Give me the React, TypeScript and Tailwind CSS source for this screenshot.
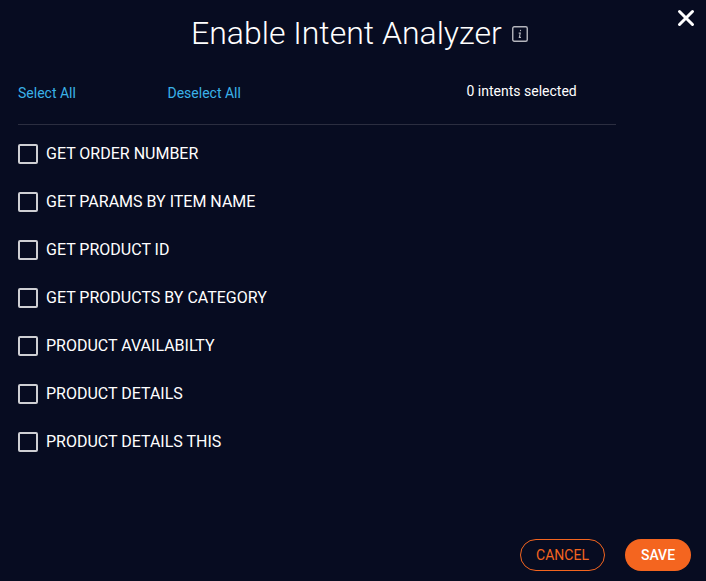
import React from "react";

const intents: string[] = [
  "GET ORDER NUMBER",
  "GET PARAMS BY ITEM NAME",
  "GET PRODUCT ID",
  "GET PRODUCTS BY CATEGORY",
  "PRODUCT AVAILABILTY",
  "PRODUCT DETAILS",
  "PRODUCT DETAILS THIS",
];

export default function App() {
  return (
    <div className="relative flex h-[581px] w-[706px] flex-col overflow-hidden bg-[#070c21] font-['Roboto',sans-serif] text-white">
      <button aria-label="Close" className="absolute left-[677px] top-[9px]">
        <svg width="18" height="18" viewBox="0 0 18 18" fill="none" stroke="white" strokeWidth="3" strokeLinecap="round">
          <path d="M2.5 2.5 15.5 15.5M15.5 2.5 2.5 15.5" />
        </svg>
      </button>
      <header className="flex h-[66px] items-center pl-[191px]">
        <h1 className="whitespace-nowrap text-[32px] font-light leading-[40px]">Enable Intent Analyzer</h1>
        <svg className="ml-[10px] mt-[2px]" width="16" height="16" viewBox="0 0 16 16" fill="none" stroke="#b5b6bd">
          <rect x="0.75" y="0.75" width="14.5" height="14.5" rx="1.5" strokeWidth="1.4" />
          <path d="M8.6 3.9 8.4 5.2M6.7 7.1H8.3L7.3 11.4H9" strokeWidth="1.1" />
        </svg>
      </header>
      <div className="ml-[18px] mt-[16px] flex h-[43px] w-[598px] border-b border-[#2b2e40] text-sm leading-[22px]">
        <button className="h-[22px] w-[149.5px] text-left text-[#3ab2e8]">Select All</button>
        <button className="h-[22px] w-[299px] text-left text-[#3ab2e8]">Deselect All</button>
        <span className="-mt-[2px]">0 intents selected</span>
      </div>
      <ul className="ml-[18px] mt-[5px]">
        {intents.map((name) => (
          <li key={name} className="flex h-12 items-center">
            <span className="mr-2 h-5 w-5 rounded-[2px] border-2 border-[#cecfd3]" />
            <span className="text-base">{name}</span>
          </li>
        ))}
      </ul>
      <footer className="mt-[73px] flex gap-5 pl-[520px] text-sm">
        <button className="h-8 w-[85px] rounded-full border border-[#f4651f] text-[#f4651f]">CANCEL</button>
        <button className="h-8 w-[66px] rounded-full bg-[#f4651f] font-medium">SAVE</button>
      </footer>
    </div>
  );
}
